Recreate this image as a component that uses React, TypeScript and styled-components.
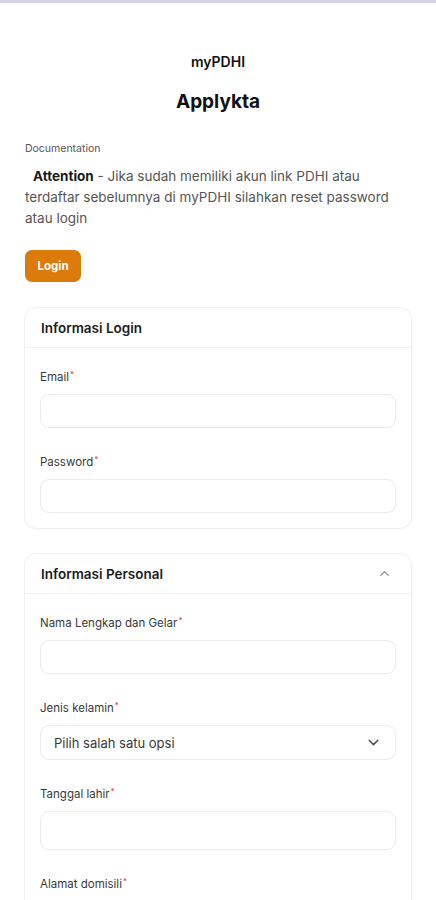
import React from "react";
import styled, { createGlobalStyle } from "styled-components";
import { ChevronUp, ChevronDown } from "lucide-react";

const Global = createGlobalStyle`
  html, body { margin: 0; padding: 0; background: #ffffff; }
  body { font-family: Inter, "Noto Sans", Arial, sans-serif; color: #1f1f1f; -webkit-font-smoothing: antialiased; }
  * { box-sizing: border-box; }
`;

const TopBar = styled.div`
  height: 3px;
  background: #d9d6e4;
`;

const Page = styled.main`
  padding: 49px 24px 0 24px;
  display: flex;
  flex-direction: column;
`;

const Brand = styled.div`
  text-align: center;
  font-size: 14px;
  font-weight: 600;
  line-height: 20px;
  color: #111;
`;

const Title = styled.h1`
  margin: 17px 0 0 0;
  text-align: center;
  font-size: 19px;
  font-weight: 700;
  line-height: 26px;
  color: #111;
`;

const DocLabel = styled.div`
  margin-top: 26px;
  padding-left: 1px;
  font-size: 10.5px;
  line-height: 16px;
  color: #555;
`;

const Notice = styled.p`
  margin: 9px 0 0 0;
  padding-left: 1px;
  text-indent: 8px;
  font-size: 13.5px;
  line-height: 21px;
  color: #555;
  max-width: 388px;
`;

const Strong = styled.strong`
  color: #1a1a1a;
  font-weight: 700;
`;

const LoginButton = styled.button`
  margin-top: 21px;
  align-self: flex-start;
  margin-left: 1px;
  height: 32px;
  width: 56px;
  border: none;
  border-radius: 7px;
  background: #dc7a0b;
  color: #fff;
  font-family: inherit;
  font-size: 11.5px;
  font-weight: 700;
`;

const Card = styled.section<{ $mt: number }>`
  margin-top: ${(p) => p.$mt}px;
  border: 1px solid #f0f0f0;
  border-radius: 12px;
  background: #fff;
  box-shadow: 0 1px 2px rgba(0, 0, 0, 0.02);
`;

const CardHeader = styled.div`
  height: 40px;
  display: flex;
  align-items: center;
  justify-content: space-between;
  padding: 0 19px 0 16px;
  border-bottom: 1px solid #f2f2f2;
  font-size: 13.5px;
  font-weight: 600;
  color: #1c1c1c;
`;

const CardBody = styled.div`
  padding: 21px 15px 15px 15px;
  display: flex;
  flex-direction: column;
  gap: 26px;
`;

const Field = styled.div`
  display: flex;
  flex-direction: column;
  gap: 8px;
`;

const Label = styled.label`
  font-size: 11.5px;
  line-height: 16px;
  color: #3a3a3a;
`;

const Req = styled.span`
  position: relative;
  top: -4px;
  color: #e0364d;
  font-size: 8px;
  margin-left: 1px;
`;

const Input = styled.div<{ $h?: number }>`
  height: ${(p) => p.$h ?? 34}px;
  border: 1px solid #ececec;
  border-radius: 9px;
  background: #fff;
  box-shadow: 0 1px 1px rgba(0, 0, 0, 0.02);
`;

const Select = styled.div`
  height: 35px;
  border: 1px solid #ececec;
  border-radius: 9px;
  display: flex;
  align-items: center;
  justify-content: space-between;
  padding: 0 13px 0 13px;
  font-size: 13px;
  color: #3a3a3a;
`;

const Required = ({ children }: { children: React.ReactNode }) => (
  <Label>
    {children}
    <Req>*</Req>
  </Label>
);

export default function App() {
  return (
    <>
      <Global />
      <TopBar />
      <Page>
        <Brand>myPDHI</Brand>
        <Title>Applykta</Title>
        <DocLabel>Documentation</DocLabel>
        <Notice>
          <Strong>Attention</Strong> - Jika sudah memiliki akun link PDHI atau terdaftar
          sebelumnya di myPDHI silahkan reset password atau login
        </Notice>
        <LoginButton>Login</LoginButton>

        <Card $mt={25}>
          <CardHeader>Informasi Login</CardHeader>
          <CardBody>
            <Field>
              <Required>Email</Required>
              <Input $h={34} />
            </Field>
            <Field>
              <Required>Password</Required>
              <Input $h={34} />
            </Field>
          </CardBody>
        </Card>

        <Card $mt={24}>
          <CardHeader>
            Informasi Personal
            <ChevronUp size={15} color="#8a8a8a" strokeWidth={2} />
          </CardHeader>
          <CardBody>
            <Field>
              <Required>Nama Lengkap dan Gelar</Required>
              <Input $h={34} />
            </Field>
            <Field>
              <Required>Jenis kelamin</Required>
              <Select>
                Pilih salah satu opsi
                <ChevronDown size={17} color="#555" strokeWidth={2} />
              </Select>
            </Field>
            <Field>
              <Required>Tanggal lahir</Required>
              <Input $h={39} />
            </Field>
            <Field>
              <Required>Alamat domisili</Required>
              <Input $h={34} />
            </Field>
          </CardBody>
        </Card>
      </Page>
    </>
  );
}
